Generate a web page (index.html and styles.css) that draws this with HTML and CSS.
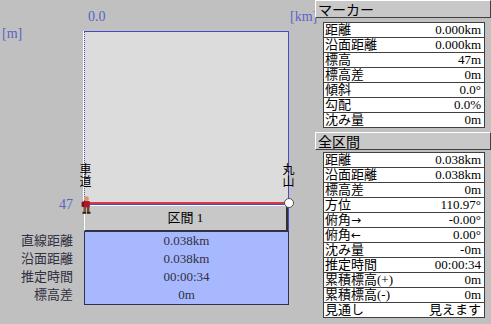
FILE: index.html
```html
<!DOCTYPE html>
<html lang="ja">
<head>
    <meta charset="UTF-8">
    <title>断面図</title>
    <link rel="stylesheet" href="styles.css">
</head>
<body>
    <div class="screen">
        <div class="chart-side">
            <div></div>
            <div class="axis-x-start">0.0</div>
            <div class="axis-x-unit">[km]</div>

            <div class="y-axis">
                <span class="y-unit">[m]</span>
                <span class="y-value">47</span>
            </div>
            <div class="plot">
                <span class="point-name start-name">車道</span>
                <span class="point-name end-name">丸山</span>
                <svg class="walker" viewBox="0 0 12 18">
                    <path d="M3.2 2.4 Q6 -0.6 8.8 2.4 Z" fill="#e8dcc0"/>
                    <circle cx="6" cy="3.6" r="2.3" fill="#d89868"/>
                    <rect x="2.8" y="5.8" width="6.4" height="6" rx="1" fill="#b01828"/>
                    <rect x="1.4" y="6.4" width="2.2" height="4.8" fill="#7a1018"/>
                    <rect x="3.2" y="11.4" width="2.4" height="4.8" fill="#7a5a38"/>
                    <rect x="6.4" y="11.4" width="2.4" height="4.8" fill="#6a4a2c"/>
                    <rect x="2.2" y="16" width="3.4" height="1.8" fill="#2c2010"/>
                    <rect x="6.4" y="16" width="3.4" height="1.8" fill="#2c2010"/>
                </svg>
                <span class="end-dot"></span>
            </div>
            <div></div>

            <div></div>
            <div class="segment-cell">
                <div class="segment-bar">区間 1</div>
            </div>
            <div></div>

            <ul class="summary-labels">
                <li>直線距離</li>
                <li>沿面距離</li>
                <li>推定時間</li>
                <li>標高差</li>
            </ul>
            <ul class="summary-values">
                <li>0.038km</li>
                <li>0.038km</li>
                <li>00:00:34</li>
                <li>0m</li>
            </ul>
            <div></div>
        </div>

        <div class="info-side">
            <div class="panel-title">マーカー</div>
            <div class="info-table">
                <div class="info-row"><span>距離</span><span>0.000km</span></div>
                <div class="info-row"><span>沿面距離</span><span>0.000km</span></div>
                <div class="info-row"><span>標高</span><span>47m</span></div>
                <div class="info-row"><span>標高差</span><span>0m</span></div>
                <div class="info-row"><span>傾斜</span><span>0.0°</span></div>
                <div class="info-row"><span>勾配</span><span>0.0%</span></div>
                <div class="info-row"><span>沈み量</span><span>0m</span></div>
            </div>

            <div class="panel-title second">全区間</div>
            <div class="info-table tight">
                <div class="info-row"><span>距離</span><span>0.038km</span></div>
                <div class="info-row"><span>沿面距離</span><span>0.038km</span></div>
                <div class="info-row"><span>標高差</span><span>0m</span></div>
                <div class="info-row"><span>方位</span><span>110.97°</span></div>
                <div class="info-row"><span>俯角<span class="arrow">→</span></span><span>-0.00°</span></div>
                <div class="info-row"><span>俯角<span class="arrow">←</span></span><span>0.00°</span></div>
                <div class="info-row"><span>沈み量</span><span>-0m</span></div>
                <div class="info-row"><span>推定時間</span><span>00:00:34</span></div>
                <div class="info-row"><span>累積標高(+)</span><span>0m</span></div>
                <div class="info-row"><span>累積標高(-)</span><span>0m</span></div>
                <div class="info-row"><span>見通し</span><span>見えます</span></div>
            </div>
        </div>
    </div>
</body>
</html>
```

FILE: styles.css
```css
* {
    margin: 0;
    padding: 0;
    box-sizing: border-box;
}

body {
    background: #c0c0c0;
    font-family: "Liberation Serif", "Noto Sans CJK JP", serif;
    color: #000;
}

.screen {
    display: flex;
    width: 491px;
    height: 324px;
    overflow: hidden;
}

/* left: profile chart */

.chart-side {
    display: grid;
    grid-template-columns: 84px 205px 26px;
    grid-template-rows: 31px 174px 26px 74px;
    align-content: start;
}

.axis-x-start,
.axis-x-unit,
.y-axis {
    color: #5864c8;
    font-size: 14px;
    line-height: 15px;
}

.axis-x-start {
    padding: 9px 0 0 4px;
}

.axis-x-unit {
    padding: 9px 0 0 1px;
}

.y-axis {
    display: flex;
    flex-direction: column;
    justify-content: space-between;
}

.y-unit {
    margin-top: -5px;
    padding-left: 2px;
}

.y-value {
    align-self: flex-end;
    margin-right: 11px;
    margin-bottom: -7px;
}

.plot {
    position: relative;
    background: #dcdcdc;
    border-top: 1px solid #4848c8;
    border-right: 1px solid #4848c8;
    border-bottom: 1px solid #4848c8;
    border-left: 1px dotted #4848c8;
    box-shadow: -1px 0 0 #fff, inset 0 -2px 0 #d83848;
}

.point-name {
    position: absolute;
    top: 131px;
    writing-mode: vertical-rl;
    font-family: "Noto Sans CJK JP", sans-serif;
    font-size: 12px;
    line-height: 13px;
}

.start-name {
    left: -6px;
}

.end-name {
    left: 197px;
}

.walker {
    position: absolute;
    left: -5px;
    top: 163px;
    width: 13px;
    height: 19px;
}

.end-dot {
    position: absolute;
    left: 199px;
    top: 166px;
    width: 10px;
    height: 10px;
    border-radius: 50%;
    background: #fff;
    border: 1px solid #505050;
}

.segment-cell {
    border-right: 1px solid #4848c8;
}

.segment-bar {
    height: 100%;
    background: #c8c8c8;
    border-top: 1px solid #fff;
    border-left: 1px solid #fff;
    border-right: 2px solid #303030;
    border-bottom: 1px solid #303030;
    text-align: center;
    font-size: 13px;
    line-height: 24px;
}

.summary-labels,
.summary-values {
    list-style: none;
    font-size: 13px;
    line-height: 18px;
    color: #303040;
}

.summary-labels {
    padding: 1px 11px 0 0;
    text-align: right;
}

.summary-values {
    background: #a8b8ff;
    border: 1px solid #303050;
    text-align: center;
}

/* right: info panels */

.info-side {
    width: 176px;
}

.panel-title {
    height: 18px;
    background: #c8c8c8;
    border: 1px solid;
    border-color: #fff #404040 #404040 #fff;
    padding-left: 2px;
    font-family: "Noto Sans CJK JP", sans-serif;
    font-size: 14px;
    line-height: 16px;
}

.panel-title.second {
    margin-top: 4px;
}

.info-table {
    margin: 4px 6px 0 8px;
    background: #fff;
    border: 1px solid #404040;
    border-bottom: none;
}

.info-table.tight {
    margin-top: 2px;
}

.info-row {
    display: flex;
    justify-content: space-between;
    height: 15px;
    border-bottom: 1px solid #404040;
    padding: 0 3px 0 1px;
    font-size: 13px;
    line-height: 14px;
    white-space: nowrap;
}

.arrow {
    font-family: "DejaVu Sans", sans-serif;
    font-size: 12px;
}
```
